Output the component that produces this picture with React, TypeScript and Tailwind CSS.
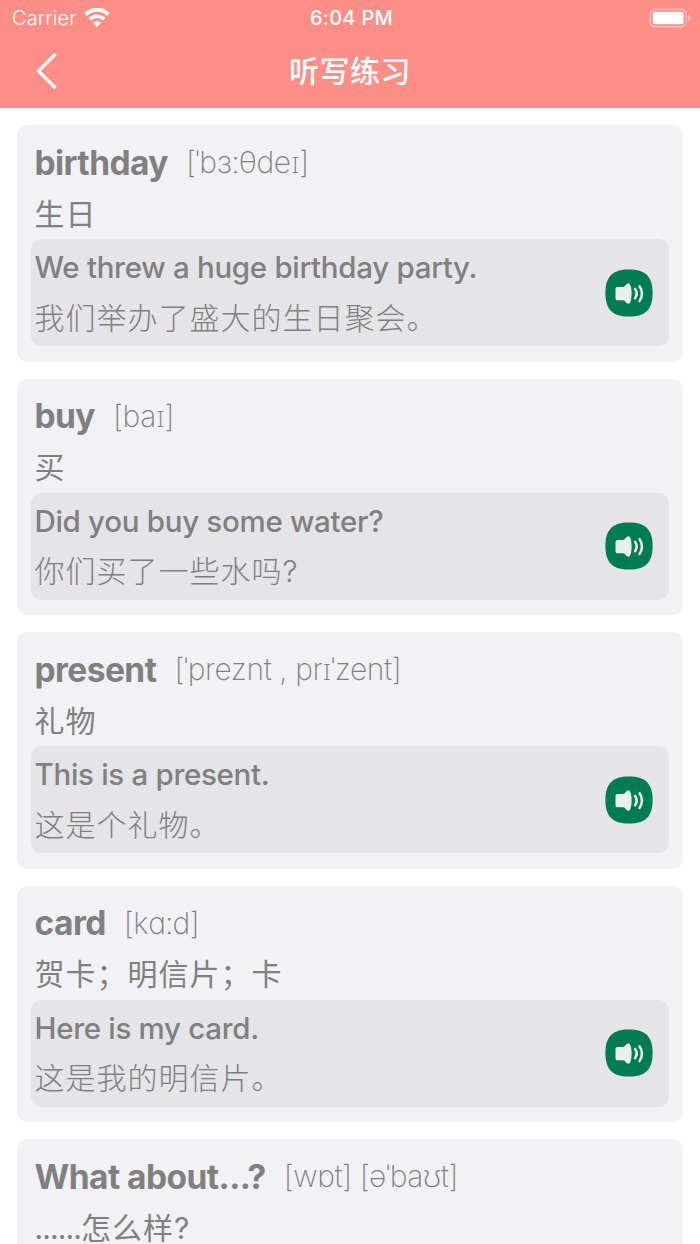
interface WordItem {
  id: number;
  word: string;
  phonetic: string;
  meaning: string;
  sentence: string;
  translation: string;
}

const words: WordItem[] = [
  {
    id: 1,
    word: 'birthday',
    phonetic: '[ˈbɜːθdeɪ]',
    meaning: '生日',
    sentence: 'We threw a huge birthday party.',
    translation: '我们举办了盛大的生日聚会。'
  },
  {
    id: 2,
    word: 'buy',
    phonetic: '[baɪ]',
    meaning: '买',
    sentence: 'Did you buy some water?',
    translation: '你们买了一些水吗?'
  },
  {
    id: 3,
    word: 'present',
    phonetic: '[ˈpreznt , prɪˈzent]',
    meaning: '礼物',
    sentence: 'This is a present.',
    translation: '这是个礼物。'
  },
  {
    id: 4,
    word: 'card',
    phonetic: '[kɑːd]',
    meaning: '贺卡；明信片；卡',
    sentence: 'Here is my card.',
    translation: '这是我的明信片。'
  },
  {
    id: 5,
    word: 'What about...?',
    phonetic: '[wɒt] [əˈbaʊt]',
    meaning: '......怎么样?',
    sentence: 'What about this one?',
    translation: '这个怎么样?'
  }
];

function StatusBar() {
  return (
    <div className="grid h-9 grid-cols-3 items-center pl-3 pr-[9px]">
      <div className="flex items-center gap-2">
        <span className="text-[20px] font-light tracking-[0.1px]">Carrier</span>
        <svg width="26" height="20" viewBox="0 0 26 20" fill="none" stroke="currentColor">
          <path d="M1.6 6.5a16.2 16.2 0 0 1 22.8 0" strokeWidth="4" />
          <path d="M5.8 11.3a10.2 10.2 0 0 1 14.4 0" strokeWidth="3.6" />
          <path d="M13 19 9 15a5.7 5.7 0 0 1 8 0Z" fill="currentColor" stroke="none" />
        </svg>
      </div>
      <span className="text-center text-[20px] font-medium tracking-[0.3px]">6:04 PM</span>
      <svg className="justify-self-end" width="42" height="20" viewBox="0 0 42 20" fill="none">
        <rect x="1.2" y="1.2" width="36" height="17.6" rx="5" stroke="white" strokeOpacity="0.45" strokeWidth="1.4" />
        <rect x="3.8" y="3.8" width="30.8" height="12.4" rx="2.4" fill="white" />
        <path d="M39 6.8c2.6 1.2 2.6 5.2 0 6.4Z" fill="white" fillOpacity="0.5" />
      </svg>
    </div>
  );
}

function SpeakerButton() {
  return (
    <button className="size-12 shrink-0 cursor-pointer" aria-label="播放">
      <svg width="48" height="48" viewBox="0 0 48 48">
        <path d="M24 .4C40.5.4 47.6 7.5 47.6 24S40.5 47.6 24 47.6.4 40.5.4 24 7.5.4 24 .4Z" fill="#007B52" />
        <path
          d="M12.7 17.9h5.6c1.8 0 3.1-3.7 5.2-3.7 4.2 0 4.2 20.6 0 20.6-2.1 0-3.4-3.5-5.2-3.5h-5.6c-1.4 0-2.2-.8-2.2-2.1v-9.1c0-1.4.8-2.2 2.2-2.2Z"
          fill="#E8F0ED"
        />
        <path d="M30.1 19.9c1.9 2.7 1.9 6.6 0 9.4M34.6 17.2c3.1 4.3 3.1 10.3 0 14.7" fill="none" stroke="#E8F0ED" strokeWidth="2.5" strokeLinecap="round" />
      </svg>
    </button>
  );
}

function WordCard({ item }: { item: WordItem }) {
  // Leading dots are set tighter than the Chinese text after them
  const dots = item.meaning.match(/^\.*/)?.[0] ?? '';

  return (
    <div className="h-[236.5px] shrink-0 rounded-[10px] bg-[#F2F1F6] pl-[13.5px] pr-3.5 pt-3">
      <div className="flex h-[51px] items-center gap-[18px] whitespace-pre pl-1">
        <span className="text-[33.5px] font-bold tracking-[-0.55px]">{item.word}</span>
        <span className="font-['Inter','Roboto','Noto_Sans',sans-serif] text-[30px] font-extralight tracking-[-0.4px]">
          {item.phonetic}
        </span>
      </div>
      <p className="flex h-[51px] items-center pl-1 pt-px text-[30px] tracking-[1px]">
        {dots && <span className="tracking-[-0.9px]">{dots}</span>}
        {item.meaning.slice(dots.length)}
      </p>
      <div className="flex h-[107px] items-center justify-between rounded-[10px] bg-[#E5E4E9] pl-1 pr-4">
        <div className="whitespace-nowrap">
          <p className="flex h-[50px] items-center text-[29.5px] font-medium tracking-[-0.3px]">{item.sentence}</p>
          <p className="flex h-[51px] items-center pt-px text-[30px] font-light tracking-[1px]">{item.translation}</p>
        </div>
        <SpeakerButton />
      </div>
    </div>
  );
}

export default function App() {
  return (
    <div className="flex h-screen flex-col overflow-hidden bg-white font-['Inter','Noto_Sans_CJK_SC',sans-serif] text-[#808080]">
      <header className="h-[108px] shrink-0 bg-[#FF8E87] text-white">
        <StatusBar />
        <div className="grid h-[70px] grid-cols-3 items-center px-9">
          <button className="w-6 cursor-pointer" aria-label="返回">
            <svg width="24" height="38" viewBox="0 0 24 38" fill="none" stroke="currentColor" strokeWidth="3.2">
              <path d="M19.5 2 2.5 19l17 17" />
            </svg>
          </button>
          <h1 className="text-center text-[30px] font-medium tracking-[0.5px]">听写练习</h1>
        </div>
      </header>

      <main className="flex min-h-0 flex-1 flex-col gap-[17px] overflow-hidden px-[17px] pt-[17.3px]">
        {words.map((item) => (
          <WordCard key={item.id} item={item} />
        ))}
      </main>
    </div>
  );
}
